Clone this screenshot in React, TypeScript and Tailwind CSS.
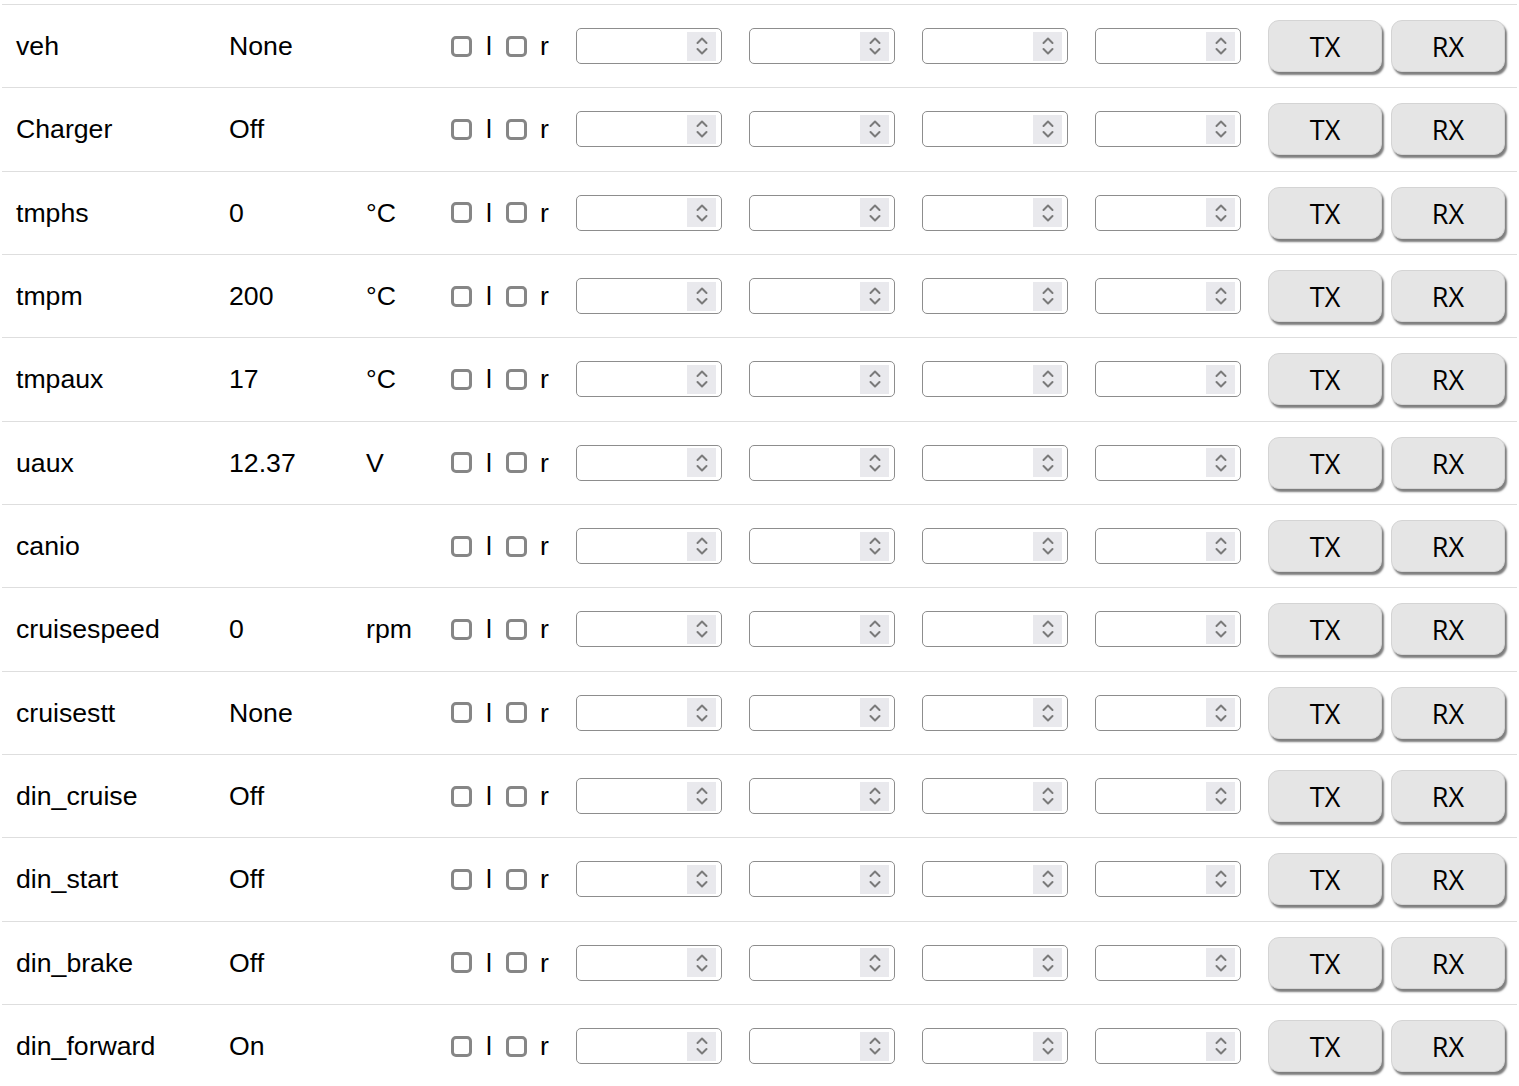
const rows: [string, string, string][] = [
  ['veh', 'None', ''],
  ['Charger', 'Off', ''],
  ['tmphs', '0', '°C'],
  ['tmpm', '200', '°C'],
  ['tmpaux', '17', '°C'],
  ['uaux', '12.37', 'V'],
  ['canio', '', ''],
  ['cruisespeed', '0', 'rpm'],
  ['cruisestt', 'None', ''],
  ['din_cruise', 'Off', ''],
  ['din_start', 'Off', ''],
  ['din_brake', 'Off', ''],
  ['din_forward', 'On', ''],
]

const Check = () => (
  <span className="inline-block w-[21px] h-[21px] border-[3px] border-[#868686] rounded-[5px] bg-white shrink-0" />
)

const NumberBox = () => (
  <div className="w-[146px] h-[36px] border border-[#8d8d8d] rounded-[5px] bg-white flex items-center justify-end pr-[5px] shrink-0">
    <div className="w-[29px] h-[29px] bg-[#e9e9ed] flex items-center justify-center">
      <svg width="14" height="22" viewBox="0 0 14 22" fill="none" stroke="#7a7a7a" strokeWidth="2" strokeLinecap="round" strokeLinejoin="round">
        <path d="M2.5 8 L7 3.5 L11.5 8" />
        <path d="M2.5 14 L7 18.5 L11.5 14" />
      </svg>
    </div>
  </div>
)

const Btn = ({ label }: { label: string }) => (
  <button className="w-[114px] h-[52px] pt-[2px] rounded-[11px] bg-[#e5e5e5] border border-[#d4d4d4] shadow-[2px_3px_2px_#7e7e7e] text-[27px] text-black shrink-0 font-['Open_Sans',sans-serif]">
    {label}
  </button>
)

export default function App() {
  return (
    <div className="bg-white min-h-screen pt-[4px] px-[2px] font-['Liberation_Sans',Arial,sans-serif] text-[26.67px] text-black">
      <div className="w-[1515px]">
        {rows.map(([name, value, unit]) => (
          <div key={name} className="h-[83.33px] border-t border-[#dedede] flex items-center">
            <div className="w-[227px] pl-[14px] shrink-0">{name}</div>
            <div className="w-[137px] shrink-0">{value}</div>
            <div className="w-[85px] shrink-0">{unit}</div>
            <div className="w-[125px] flex items-center shrink-0">
              <Check />
              <span className="ml-[14px] mr-[14px]">l</span>
              <Check />
              <span className="ml-[13px]">r</span>
            </div>
            <div className="flex items-center gap-[27px]">
              <NumberBox />
              <NumberBox />
              <NumberBox />
              <NumberBox />
            </div>
            <div className="flex items-center gap-[9px] ml-[27px]">
              <Btn label="TX" />
              <Btn label="RX" />
            </div>
          </div>
        ))}
      </div>
    </div>
  )
}
